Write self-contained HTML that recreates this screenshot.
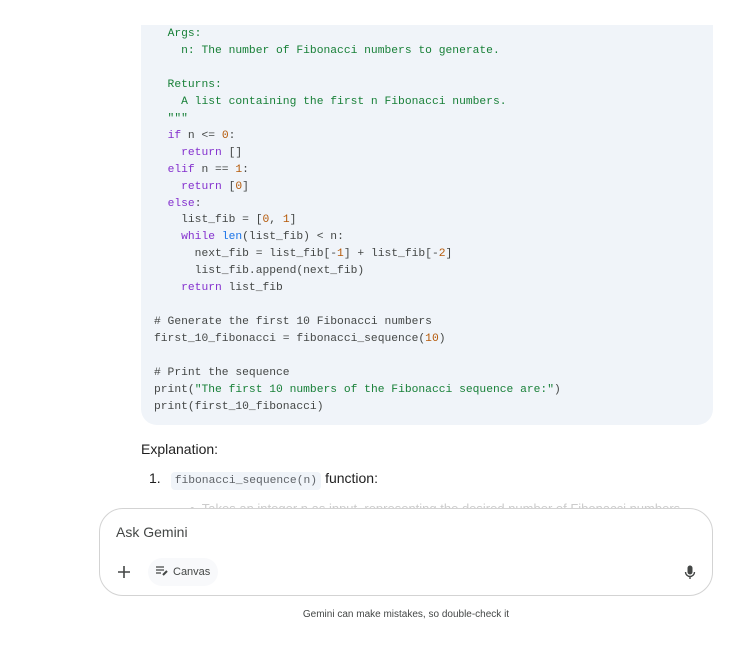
<!DOCTYPE html>
<html><head><style>
body{margin:0;width:752px;height:658px;background:#fff;position:relative;overflow:hidden;font-family:"Liberation Sans",sans-serif;}
.code{position:absolute;left:141px;top:25px;width:572px;height:400px;background:#f0f4f9;border-radius:0 0 16px 16px;}
pre{position:absolute;left:154px;top:26px;margin:0;font-family:"Liberation Mono",monospace;font-size:11.3px;line-height:16.95px;color:#444746;}
.s{color:#188038}.k{color:#8430ce}.n{color:#b55908}.b{color:#1a73e8}
.expl{position:absolute;left:141px;top:441px;font-size:14px;color:#1f1f1f;}
.li{position:absolute;left:149px;top:470px;font-size:14px;color:#1f1f1f;}
.ic{font-family:"Liberation Mono",monospace;font-size:11.3px;color:#5f6368;background:#f0f4f9;padding:3px 4px;border-radius:4px;margin-left:10px;margin-right:4px;}
.fade{position:absolute;left:190px;top:501px;font-size:13px;color:#ccc;white-space:nowrap;}
.box{position:absolute;left:99px;top:508px;width:612px;height:86px;border:1px solid #d3d3d3;border-radius:24px;background:#fff;}
.ph{position:absolute;left:16px;top:15px;font-size:14px;color:#444746;}
.plus{position:absolute;left:14px;top:53px;width:20px;height:20px;}
.canvas{position:absolute;left:48px;top:49px;height:28px;padding:0 8px;border-radius:14px;background:#f8f9fb;font-size:11px;color:#444746;line-height:28px;}
.foot{position:absolute;left:0;width:812px;top:609px;text-align:center;font-size:10px;color:#444746;}
</style></head><body>
<div class="code"></div>
<pre>  <span class="s">Args:
    n: The number of Fibonacci numbers to generate.

  Returns:
    A list containing the first n Fibonacci numbers.
  """</span>
  <span class="k">if</span> n &lt;= <span class="n">0</span>:
    <span class="k">return</span> []
  <span class="k">elif</span> n == <span class="n">1</span>:
    <span class="k">return</span> [<span class="n">0</span>]
  <span class="k">else</span>:
    list_fib = [<span class="n">0</span>, <span class="n">1</span>]
    <span class="k">while</span> <span class="b">len</span>(list_fib) &lt; n:
      next_fib = list_fib[-<span class="n">1</span>] + list_fib[-<span class="n">2</span>]
      list_fib.append(next_fib)
    <span class="k">return</span> list_fib

# Generate the first 10 Fibonacci numbers
first_10_fibonacci = fibonacci_sequence(<span class="n">10</span>)

# Print the sequence
print(<span class="s">"The first 10 numbers of the Fibonacci sequence are:"</span>)
print(first_10_fibonacci)</pre>
<div class="expl">Explanation:</div>
<div class="li">1.<span class="ic">fibonacci_sequence(n)</span>function:</div>
<div class="fade">•&nbsp;&nbsp;Takes an integer n as input, representing the desired number of Fibonacci numbers</div>
<div class="box">
<div class="ph">Ask Gemini</div>
<svg class="plus" viewBox="0 0 20 20"><path d="M10 4v12M4 10h12" stroke="#444746" stroke-width="1.6"/></svg>
<div class="canvas"><svg width="13" height="11" viewBox="0 0 13 11" style="vertical-align:-1px;margin-right:4px"><path d="M0 2h8M0 5h8M0 8h5" stroke="#444746" stroke-width="1.2"/><path d="M7 10l4-4" stroke="#444746" stroke-width="2"/></svg>Canvas</div>
<svg style="position:absolute;left:584px;top:56px" width="12" height="16" viewBox="0 0 12 16"><rect x="3.5" y="0.5" width="5" height="9" rx="2.5" fill="#444746"/><path d="M1.5 7a4.5 4.5 0 0 0 9 0M6 11.5V14" stroke="#444746" stroke-width="1.4" fill="none"/></svg>
</div>
<div class="foot">Gemini can make mistakes, so double-check it</div>
</body></html>
